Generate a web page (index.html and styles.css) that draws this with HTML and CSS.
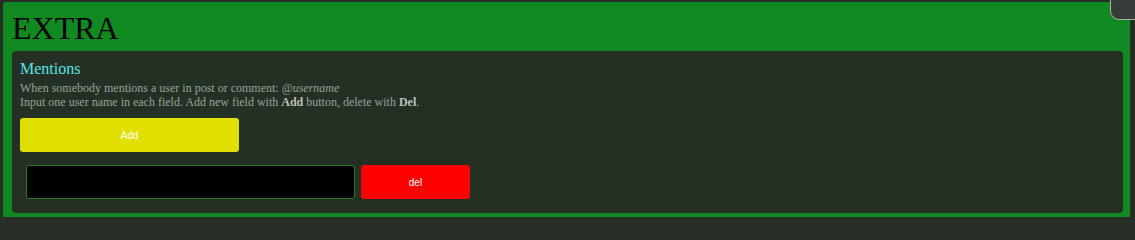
FILE: index.html
```html
<!DOCTYPE html>
<html>
<head>
<meta charset="utf-8">
<link rel="stylesheet" href="styles.css">
</head>
<body>
<div class="page">
  <h1 class="title">EXTRA</h1>
  <div class="panel">
    <div class="panel-title">Mentions</div>
    <div class="desc">When somebody mentions a user in post or comment: <i>@username</i></div>
    <div class="desc">Input one user name in each field. Add new field with <b>Add</b> button, delete with <b>Del</b>.</div>
    <button class="btn btn-add">Add</button>
    <div class="row">
      <input class="field" type="text">
      <button class="btn btn-del">del</button>
    </div>
  </div>
</div>
<div class="corner"></div>
</body>
</html>
```
FILE: styles.css
```css
html, body {
  margin: 0;
  padding: 0;
  background: #262e26;
  overflow: hidden;
}
body {
  font-family: "Liberation Serif", "Times New Roman", serif;
}
.page {
  margin: 2px 5px 0 3px;
  padding: 8px 7px 4px 9px;
  background: #108a20;
  border-radius: 3px 3px 0 0;
}
.title {
  margin: 0 0 4px 0;
  font-size: 32px;
  font-weight: normal;
  color: #000;
  line-height: 37px;
}
.panel {
  background: #233023;
  border-radius: 4px;
  padding: 8px 8px 14px 8px;
}
.panel-title {
  font-size: 16px;
  line-height: 19px;
  margin-bottom: 3px;
  color: #5ae4e4;
}
.desc {
  font-size: 12px;
  line-height: 14px;
  color: #9aa39a;
}
.desc b {
  color: #bcc2bc;
}
.btn {
  font-family: "Liberation Sans", Arial, sans-serif;
  font-size: 10px;
  color: #fff;
  border: none;
  border-radius: 3px;
  height: 34px;
  padding: 0;
  display: block;
}
.btn-add {
  margin-top: 9px;
  width: 219px;
  background: #e0df00;
}
.row {
  display: flex;
  gap: 6px;
  margin: 13px 0 0 6px;
}
.field {
  width: 329px;
  height: 34px;
  box-sizing: border-box;
  background: #000;
  border: 1px solid #2b7a2b;
  border-radius: 3px;
  color: #fff;
}
.btn-del {
  width: 109px;
  background: #ff0000;
}
.corner {
  position: fixed;
  top: -2px;
  right: -2px;
  width: 25px;
  height: 20px;
  background: #383c38;
  border: 1px solid #a8b0a8;
  border-bottom-left-radius: 9px;
}
```
